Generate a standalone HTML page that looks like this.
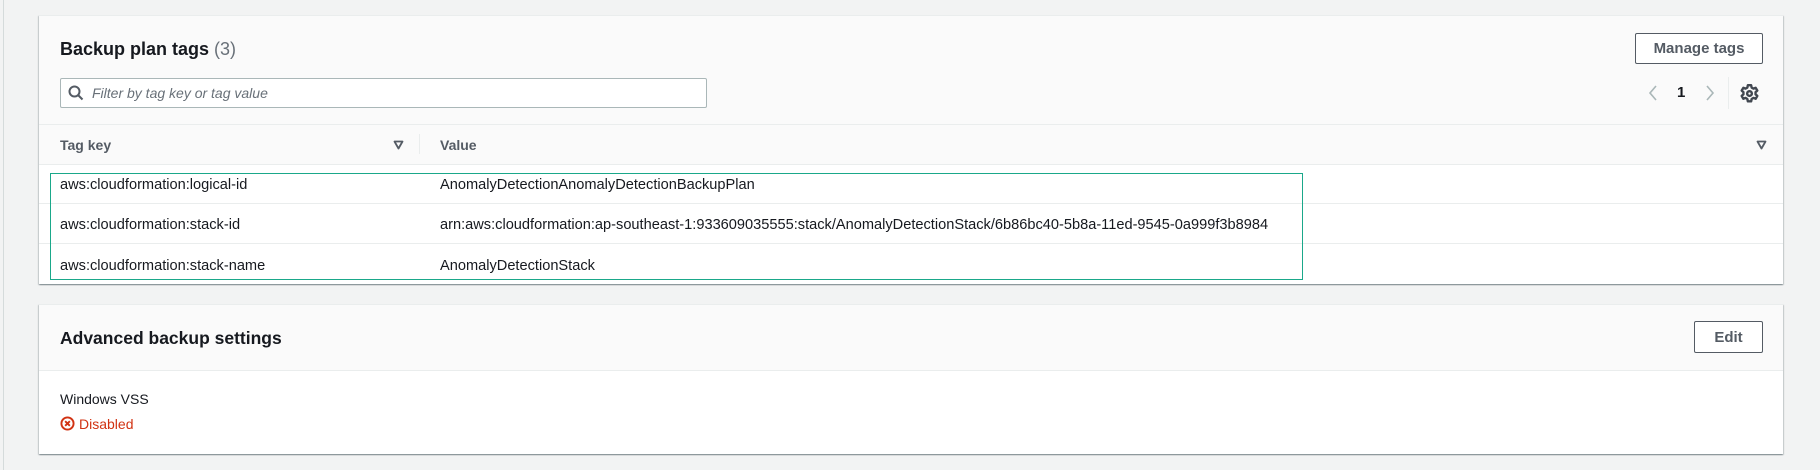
<!DOCTYPE html>
<html><head><meta charset="utf-8"><style>
*{box-sizing:border-box;margin:0;padding:0}
body{width:1820px;height:470px;background:#f2f3f3;font-family:"Liberation Sans",sans-serif;color:#16191f;position:relative;overflow:hidden}
.abs{position:absolute}
.card{position:absolute;left:39px;width:1744px;background:#fff;box-shadow:0 1px 1px 0 rgba(0,28,36,.3),1px 1px 1px 0 rgba(0,28,36,.15),-1px 1px 1px 0 rgba(0,28,36,.15);border-top:1px solid #eaeded}
.btn{position:absolute;border:1px solid #545b64;border-radius:2px;background:#fff;font-weight:bold;font-size:15px;color:#545b64;display:flex;align-items:center;justify-content:center}
.t{position:absolute;font-size:14.6px;line-height:18px;white-space:nowrap}
.hl{position:absolute;left:0;width:1744px;height:1px;background:#eaeded}
</style></head><body>
<div class="abs" style="left:3px;top:0;width:1px;height:470px;background:#d5dbdb"></div>

<div class="card" style="top:15px;height:269px">
  <div class="abs" style="left:0;top:0;width:1744px;height:149px;background:#fafafa"></div>
  <div class="t" style="left:21px;top:22px;font-size:18px;line-height:22px;font-weight:bold">Backup plan tags <span style="font-weight:normal;color:#687078">(3)</span></div>
  <div class="btn" style="left:1596px;top:17px;width:128px;height:31px">Manage tags</div>
  <div class="abs" style="left:21px;top:62px;width:647px;height:30px;border:1px solid #aab7b8;border-radius:2px;background:#fff"></div>
  <svg class="abs" style="left:29px;top:69px" width="16" height="16" viewBox="0 0 16 16"><circle cx="6.5" cy="6.5" r="5" fill="none" stroke="#545b64" stroke-width="2"/><path d="M10 10l4.5 4.5" stroke="#545b64" stroke-width="2"/></svg>
  <div class="t" style="left:53px;top:68px;font-style:italic;color:#687078;font-size:14px">Filter by tag key or tag value</div>
  <svg class="abs" style="left:1609px;top:68px" width="10" height="18" viewBox="0 0 10 18"><path d="M8 2L2 9l6 7" fill="none" stroke="#aab7b8" stroke-width="1.6"/></svg>
  <div class="t" style="left:1638px;top:68px;font-weight:bold;font-size:15px">1</div>
  <svg class="abs" style="left:1666px;top:68px" width="10" height="18" viewBox="0 0 10 18"><path d="M2 2l6 7-6 7" fill="none" stroke="#aab7b8" stroke-width="1.6"/></svg>
  <div class="abs" style="left:1689px;top:61px;width:1px;height:32px;background:#eaeded"></div>
  <svg class="abs" style="left:1701px;top:68px" width="19" height="19" viewBox="0 0 16 16"><path d="M6.6 1h2.8l.4 2 1.5.9 1.9-.7 1.4 2.4-1.5 1.3v1.8l1.5 1.3-1.4 2.4-1.9-.7-1.5.9-.4 2H6.6l-.4-2-1.5-.9-1.9.7L1.4 10l1.5-1.3V6.9L1.4 5.6l1.4-2.4 1.9.7 1.5-.9z" fill="none" stroke="#414750" stroke-width="2" stroke-linejoin="round"/><circle cx="8" cy="8" r="2" fill="none" stroke="#414750" stroke-width="2"/></svg>
  <div class="hl" style="top:108px"></div>
  <div class="t" style="left:21px;top:120px;font-weight:bold;font-size:14px;color:#545b64">Tag key</div>
  <svg class="abs" style="left:354px;top:124px" width="11" height="10" viewBox="0 0 11 10"><path d="M1.5 1.5h8L5.5 8.5z" fill="none" stroke="#545b64" stroke-width="1.8" stroke-linejoin="round"/></svg>
  <div class="abs" style="left:380px;top:118px;width:1px;height:20px;background:#eaeded"></div>
  <div class="t" style="left:401px;top:120px;font-weight:bold;font-size:14px;color:#545b64">Value</div>
  <svg class="abs" style="left:1717px;top:124px" width="11" height="10" viewBox="0 0 11 10"><path d="M1.5 1.5h8L5.5 8.5z" fill="none" stroke="#545b64" stroke-width="1.8" stroke-linejoin="round"/></svg>
  <div class="hl" style="top:148px"></div>
  <div class="t" style="left:21px;top:160px">aws:cloudformation:logical-id</div>
  <div class="t" style="left:401px;top:160px">AnomalyDetectionAnomalyDetectionBackupPlan</div>
  <div class="hl" style="top:187px"></div>
  <div class="t" style="left:21px;top:200px">aws:cloudformation:stack-id</div>
  <div class="t" style="left:401px;top:200px">arn:aws:cloudformation:ap-southeast-1:933609035555:stack/AnomalyDetectionStack/6b86bc40-5b8a-11ed-9545-0a999f3b8984</div>
  <div class="hl" style="top:227px"></div>
  <div class="t" style="left:21px;top:241px">aws:cloudformation:stack-name</div>
  <div class="t" style="left:401px;top:241px">AnomalyDetectionStack</div>
  <div class="abs" style="left:11px;top:157px;width:1253px;height:107px;border:1px solid #1aa88a"></div>
</div>

<div class="card" style="top:304px;height:150px">
  <div class="abs" style="left:0;top:0;width:1744px;height:65px;background:#fafafa"></div>
  <div class="t" style="left:21px;top:22px;font-size:17.5px;line-height:22px;font-weight:bold">Advanced backup settings</div>
  <div class="btn" style="left:1655px;top:16px;width:69px;height:32px">Edit</div>
  <div class="hl" style="top:65px"></div>
  <div class="t" style="left:21px;top:85px;font-size:14px">Windows VSS</div>
  <svg class="abs" style="left:21px;top:111px" width="15" height="15" viewBox="0 0 16 16"><circle cx="8" cy="8" r="6.5" fill="none" stroke="#d13212" stroke-width="2"/><path d="M5.5 5.5l5 5M10.5 5.5l-5 5" stroke="#d13212" stroke-width="2"/></svg>
  <div class="t" style="left:40px;top:110px;font-size:14px;color:#d13212">Disabled</div>
</div>
</body></html>
